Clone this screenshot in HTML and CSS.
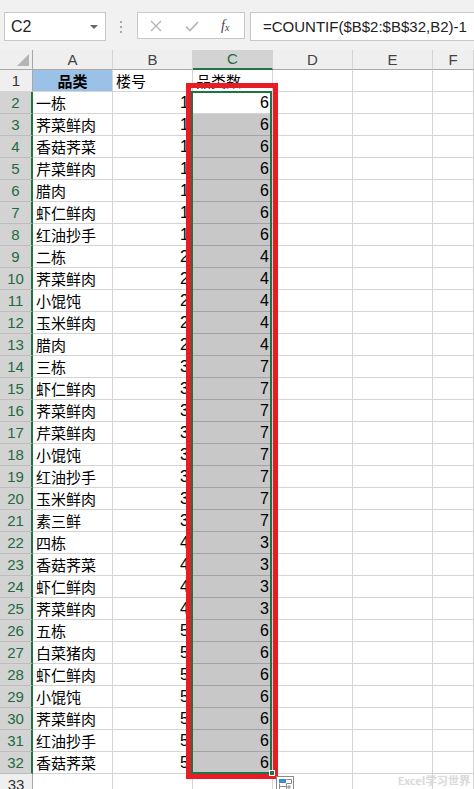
FILE: index.html
```html
<!DOCTYPE html>
<html lang="zh">
<head>
<meta charset="utf-8">
<link rel="stylesheet" href="styles.css">
</head>
<body>
<div class="fbar">
  <div class="namebox"><span>C2</span><span class="dd"></span></div>
  <div class="dots"><i></i><i></i><i></i></div>
  <div class="iconbox">
    <svg class="ic" width="14" height="14" viewBox="0 0 14 14"><path d="M2 2L12 12M12 2L2 12" stroke="#b4b4b4" stroke-width="1.4" fill="none"/></svg>
    <svg class="ic" width="16" height="14" viewBox="0 0 16 14"><path d="M2 7.5L6 11.5L14 3" stroke="#b4b4b4" stroke-width="1.6" fill="none"/></svg>
    <span class="fx">f<sub>x</sub></span>
  </div>
  <div class="formula">=COUNTIF($B$2:$B$32,B2)-1</div>
</div>
<div class="sheet">
  <div class="ch corner"><span class="tri"></span></div><div class="ch">A</div><div class="ch">B</div><div class="ch sel">C</div><div class="ch">D</div><div class="ch">E</div><div class="ch">F</div>

  <div class="rh">1</div><div class="c hd">品类</div><div class="c">楼号</div><div class="c">品类数</div><div class="c"></div><div class="c"></div><div class="c"></div>
  <div class="rh sel">2</div><div class="c">一栋</div><div class="c n">1</div><div class="c n">6</div><div class="c"></div><div class="c"></div><div class="c"></div>
  <div class="rh sel">3</div><div class="c">荠菜鲜肉</div><div class="c n">1</div><div class="c n s">6</div><div class="c"></div><div class="c"></div><div class="c"></div>
  <div class="rh sel">4</div><div class="c">香菇荠菜</div><div class="c n">1</div><div class="c n s">6</div><div class="c"></div><div class="c"></div><div class="c"></div>
  <div class="rh sel">5</div><div class="c">芹菜鲜肉</div><div class="c n">1</div><div class="c n s">6</div><div class="c"></div><div class="c"></div><div class="c"></div>
  <div class="rh sel">6</div><div class="c">腊肉</div><div class="c n">1</div><div class="c n s">6</div><div class="c"></div><div class="c"></div><div class="c"></div>
  <div class="rh sel">7</div><div class="c">虾仁鲜肉</div><div class="c n">1</div><div class="c n s">6</div><div class="c"></div><div class="c"></div><div class="c"></div>
  <div class="rh sel">8</div><div class="c">红油抄手</div><div class="c n">1</div><div class="c n s">6</div><div class="c"></div><div class="c"></div><div class="c"></div>
  <div class="rh sel">9</div><div class="c">二栋</div><div class="c n">2</div><div class="c n s">4</div><div class="c"></div><div class="c"></div><div class="c"></div>
  <div class="rh sel">10</div><div class="c">荠菜鲜肉</div><div class="c n">2</div><div class="c n s">4</div><div class="c"></div><div class="c"></div><div class="c"></div>
  <div class="rh sel">11</div><div class="c">小馄饨</div><div class="c n">2</div><div class="c n s">4</div><div class="c"></div><div class="c"></div><div class="c"></div>
  <div class="rh sel">12</div><div class="c">玉米鲜肉</div><div class="c n">2</div><div class="c n s">4</div><div class="c"></div><div class="c"></div><div class="c"></div>
  <div class="rh sel">13</div><div class="c">腊肉</div><div class="c n">2</div><div class="c n s">4</div><div class="c"></div><div class="c"></div><div class="c"></div>
  <div class="rh sel">14</div><div class="c">三栋</div><div class="c n">3</div><div class="c n s">7</div><div class="c"></div><div class="c"></div><div class="c"></div>
  <div class="rh sel">15</div><div class="c">虾仁鲜肉</div><div class="c n">3</div><div class="c n s">7</div><div class="c"></div><div class="c"></div><div class="c"></div>
  <div class="rh sel">16</div><div class="c">荠菜鲜肉</div><div class="c n">3</div><div class="c n s">7</div><div class="c"></div><div class="c"></div><div class="c"></div>
  <div class="rh sel">17</div><div class="c">芹菜鲜肉</div><div class="c n">3</div><div class="c n s">7</div><div class="c"></div><div class="c"></div><div class="c"></div>
  <div class="rh sel">18</div><div class="c">小馄饨</div><div class="c n">3</div><div class="c n s">7</div><div class="c"></div><div class="c"></div><div class="c"></div>
  <div class="rh sel">19</div><div class="c">红油抄手</div><div class="c n">3</div><div class="c n s">7</div><div class="c"></div><div class="c"></div><div class="c"></div>
  <div class="rh sel">20</div><div class="c">玉米鲜肉</div><div class="c n">3</div><div class="c n s">7</div><div class="c"></div><div class="c"></div><div class="c"></div>
  <div class="rh sel">21</div><div class="c">素三鲜</div><div class="c n">3</div><div class="c n s">7</div><div class="c"></div><div class="c"></div><div class="c"></div>
  <div class="rh sel">22</div><div class="c">四栋</div><div class="c n">4</div><div class="c n s">3</div><div class="c"></div><div class="c"></div><div class="c"></div>
  <div class="rh sel">23</div><div class="c">香菇荠菜</div><div class="c n">4</div><div class="c n s">3</div><div class="c"></div><div class="c"></div><div class="c"></div>
  <div class="rh sel">24</div><div class="c">虾仁鲜肉</div><div class="c n">4</div><div class="c n s">3</div><div class="c"></div><div class="c"></div><div class="c"></div>
  <div class="rh sel">25</div><div class="c">荠菜鲜肉</div><div class="c n">4</div><div class="c n s">3</div><div class="c"></div><div class="c"></div><div class="c"></div>
  <div class="rh sel">26</div><div class="c">五栋</div><div class="c n">5</div><div class="c n s">6</div><div class="c"></div><div class="c"></div><div class="c"></div>
  <div class="rh sel">27</div><div class="c">白菜猪肉</div><div class="c n">5</div><div class="c n s">6</div><div class="c"></div><div class="c"></div><div class="c"></div>
  <div class="rh sel">28</div><div class="c">虾仁鲜肉</div><div class="c n">5</div><div class="c n s">6</div><div class="c"></div><div class="c"></div><div class="c"></div>
  <div class="rh sel">29</div><div class="c">小馄饨</div><div class="c n">5</div><div class="c n s">6</div><div class="c"></div><div class="c"></div><div class="c"></div>
  <div class="rh sel">30</div><div class="c">荠菜鲜肉</div><div class="c n">5</div><div class="c n s">6</div><div class="c"></div><div class="c"></div><div class="c"></div>
  <div class="rh sel">31</div><div class="c">红油抄手</div><div class="c n">5</div><div class="c n s">6</div><div class="c"></div><div class="c"></div><div class="c"></div>
  <div class="rh sel">32</div><div class="c">香菇荠菜</div><div class="c n">5</div><div class="c n s">6</div><div class="c"></div><div class="c"></div><div class="c"></div>
  <div class="rh">33</div><div class="c"></div><div class="c"></div><div class="c"></div><div class="c"></div><div class="c"></div><div class="c"></div>
</div>

<div class="selbox"></div>
<div class="redbox"></div>
<div class="handle"></div>
<svg class="qa" width="19" height="14" viewBox="0 0 19 14">
  <rect x="0.5" y="0.5" width="17" height="14" fill="#fff" stroke="#8a8a8a"/>
  <rect x="3" y="3" width="7" height="4" fill="#3c8ad8"/>
  <path d="M10.5 3.5H15.5V7.5H10.5M3.5 7.5V13M3.5 10.5H10M10.5 7.5V13M13 9V13M11 11H15" stroke="#8a8a8a" fill="none"/>
</svg>
<div class="wm">Excel学习世界</div>
</body>
</html>
```
FILE: styles.css
```css
body {
  margin: 0;
  width: 474px;
  height: 789px;
  overflow: hidden;
  position: relative;
  background: #fff;
  font-family: "Noto Sans CJK SC", sans-serif;
}

.fbar {
  height: 50px;
  box-sizing: border-box;
  background: #f1f1f1;
  display: flex;
  align-items: flex-start;
  padding-top: 12px;
}

.namebox {
  margin-left: 4px;
  width: 102px;
  height: 29px;
  box-sizing: border-box;
  border: 1px solid #c8c8c8;
  background: #fff;
  display: flex;
  align-items: center;
  justify-content: space-between;
  padding: 0 7px 0 6px;
  font: 16px "Liberation Sans", sans-serif;
  color: #222;
}

.dd {
  width: 0;
  height: 0;
  border-left: 4px solid transparent;
  border-right: 4px solid transparent;
  border-top: 4px solid #666;
}

.dots {
  margin-left: 14px;
  width: 2px;
  height: 29px;
  display: flex;
  flex-direction: column;
  justify-content: center;
  gap: 3px;
}

.dots i {
  display: block;
  width: 2px;
  height: 2px;
  background: #a8a8a8;
}

.iconbox {
  margin-left: 15px;
  width: 108px;
  height: 27px;
  box-sizing: border-box;
  border: 1px solid #c8c8c8;
  background: #fff;
  display: flex;
  align-items: center;
  padding-left: 11px;
  gap: 21px;
}

.fx {
  font: italic 14px "Liberation Serif", serif;
  color: #444;
}

.fx sub {
  font-size: 10px;
  vertical-align: -1px;
}

.formula {
  margin-left: 5px;
  flex: 1;
  height: 29px;
  box-sizing: border-box;
  border: 1px solid #c8c8c8;
  border-right: none;
  background: #fff;
  padding-left: 12px;
  font: 15px/27px "Liberation Sans", sans-serif;
  color: #222;
  white-space: nowrap;
}

.sheet {
  display: grid;
  grid-template-columns: 33px repeat(5, 80px) 1fr;
  grid-template-rows: 20px;
  grid-auto-rows: 22px;
}

.ch {
  box-sizing: border-box;
  background: #efefef;
  border-right: 1px solid #d4d4d4;
  border-bottom: 1px solid #a8a8a8;
  text-align: center;
  font: 15px/19px "Liberation Sans", sans-serif;
  color: #444;
}

.ch.sel {
  background: #d3d3d3;
  border-bottom: 2px solid #217346;
  color: #1e6b41;
  line-height: 18px;
}

.corner {
  position: relative;
  border-right-color: #a8a8a8;
}

.tri {
  position: absolute;
  right: 3px;
  bottom: 3px;
  width: 0;
  height: 0;
  border-left: 12px solid transparent;
  border-bottom: 12px solid #b4b4b4;
}

.rh {
  box-sizing: border-box;
  background: #efefef;
  border-right: 1px solid #a8a8a8;
  border-bottom: 1px solid #d4d4d4;
  text-align: center;
  font: 15px/21px "Liberation Sans", sans-serif;
  color: #333;
}

.rh.sel {
  background: #d3d3d3;
  color: #1e6b41;
  border-right: 2px solid #217346;
  border-bottom-color: #bdbdbd;
}

.c {
  box-sizing: border-box;
  border-right: 1px solid #d4d4d4;
  border-bottom: 1px solid #d4d4d4;
  padding: 0 3px;
  font-size: 15px;
  line-height: 21px;
  color: #000;
  white-space: nowrap;
  overflow: hidden;
}

.c.hd {
  background: #9bc2e6;
  font-weight: bold;
  text-align: center;
}

.c.n {
  text-align: right;
  font-family: "Liberation Sans", sans-serif;
  font-size: 16px;
}

.c.s {
  background: #c8c8c8;
  border-bottom-color: #a2a2a2;
}

.selbox {
  position: absolute;
  left: 191px;
  top: 91px;
  width: 81px;
  height: 683px;
  box-sizing: border-box;
  border: 2px solid #217346;
}

.redbox {
  position: absolute;
  left: 186px;
  top: 83px;
  width: 92px;
  height: 696px;
  box-sizing: border-box;
  border: 5px solid #e81c24;
}

.handle {
  position: absolute;
  left: 269px;
  top: 770px;
  width: 6px;
  height: 6px;
  box-sizing: border-box;
  border: 1px solid #fff;
  background: #217346;
}

.qa {
  position: absolute;
  left: 276px;
  top: 776px;
}

.wm {
  position: absolute;
  left: 398px;
  top: 772px;
  font-size: 11px;
  color: #dcdcdc;
  letter-spacing: 0.3px;
  text-shadow: 0 0 1px #c4c4c4;
}
```
